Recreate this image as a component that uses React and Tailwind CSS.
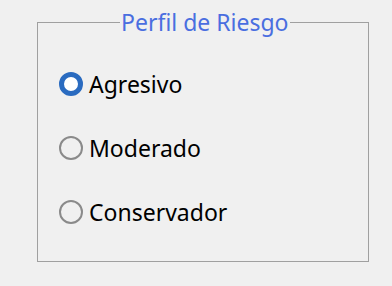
const options = [
  { label: 'Agresivo', checked: true },
  { label: 'Moderado', checked: false },
  { label: 'Conservador', checked: false },
]

function Radio({ checked }) {
  if (checked) {
    return <span className="w-[24px] h-[24px] rounded-full border-[5px] border-[#2a6bc0] bg-white shrink-0" />
  }
  return <span className="w-[24px] h-[24px] rounded-full border-2 border-[#8a8a8a] shrink-0" />
}

export default function App() {
  return (
    <div className="w-[392px] h-[286px] bg-[#f0f0f0] pt-[10px] pl-[37px]" style={{ fontFamily: '"Noto Sans", "Open Sans", sans-serif' }}>
      <fieldset className="w-[332px] h-[252px] border border-[#a0a0a0] px-0 pb-0 m-0">
        <legend className="ml-[82px] px-[1px] text-[23px] leading-[24px] text-[#4a6ee0]">Perfil de Riesgo</legend>
        <div className="flex flex-col gap-[40px] pl-[21px] pt-[38px]">
          {options.map((o) => (
            <label key={o.label} className="flex items-center gap-[6px] h-[24px] text-[23px] text-black">
              <Radio checked={o.checked} />
              <span>{o.label}</span>
            </label>
          ))}
        </div>
      </fieldset>
    </div>
  )
}
